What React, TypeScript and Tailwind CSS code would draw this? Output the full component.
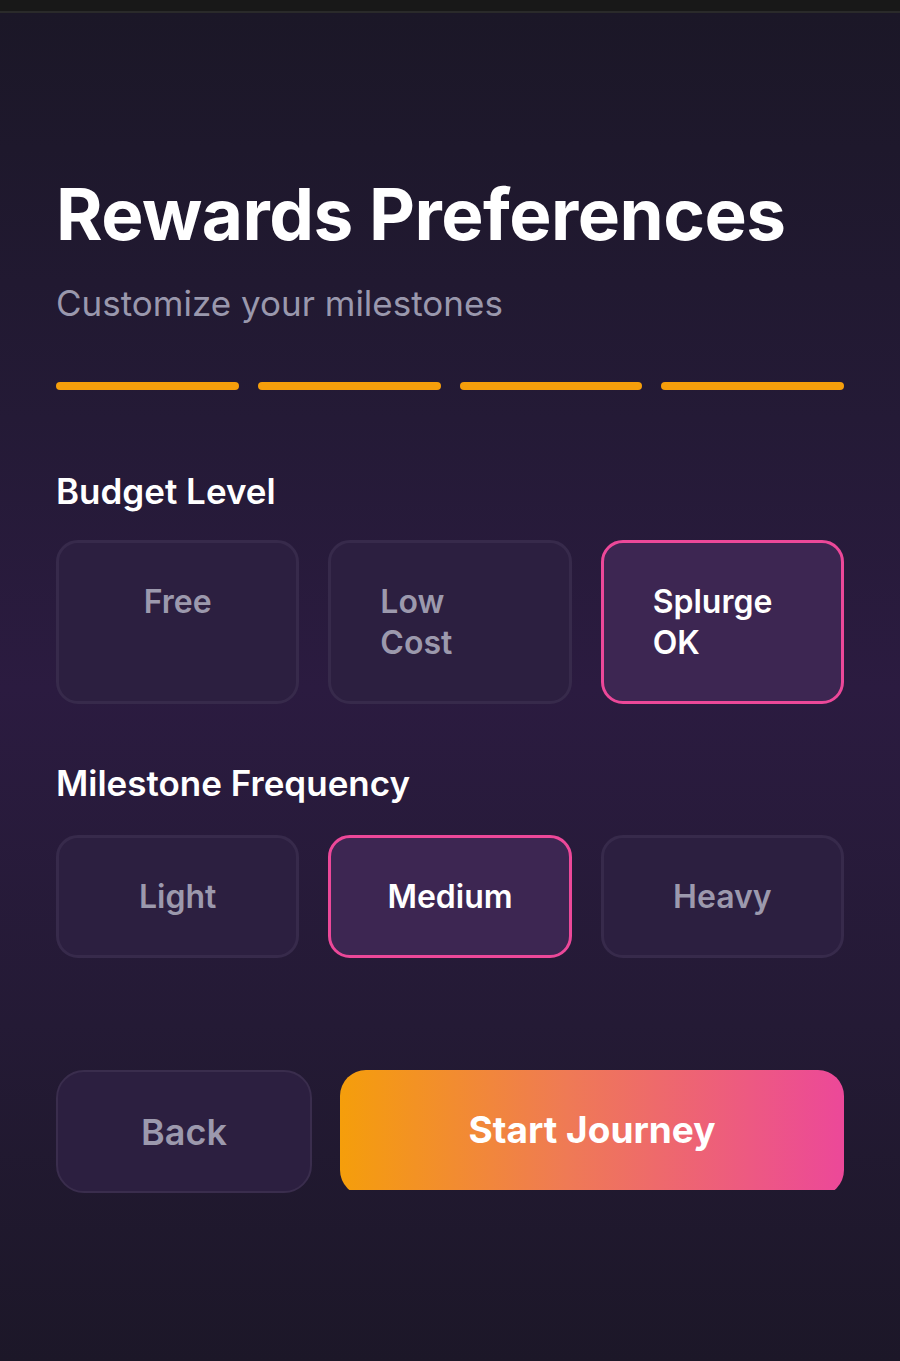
import React, { useState } from 'react';

const BUDGETS = ['Free', 'Low\nCost', 'Splurge\nOK'];
const FREQUENCIES = ['Light', 'Medium', 'Heavy'];

interface OptionCardProps {
  label: string;
  selected: boolean;
  tall?: boolean;
  onSelect: () => void;
}

const OptionCard = ({ label, selected, tall, onSelect }: OptionCardProps) => {
  const multiline = label.includes('\n');

  return (
    <button
      onClick={onSelect}
      className={`flex justify-center rounded-[22px] border-[3px] px-[49px] py-[38px] text-[32px] font-semibold leading-[41px] ${
        tall ? 'items-start' : 'items-center'
      } ${
        selected
          ? 'border-[#ec4899] bg-[#3d2652] text-white'
          : 'border-[#372a4b] bg-[#2c1f40] text-[#9c99ad]'
      }`}
    >
      <span className={multiline ? 'w-full whitespace-pre-line text-left' : 'text-center'}>{label}</span>
    </button>
  );
};

export default function App() {
  const [budget, setBudget] = useState(2);
  const [frequency, setFrequency] = useState(1);

  return (
    <div
      className="flex min-h-[1361px] flex-col bg-[#181818]"
      style={{ fontFamily: 'Inter, "Noto Sans", sans-serif' }}
    >
      {/* status strip */}
      <div className="h-[13px] shrink-0 border-b-2 border-[#2a2a2a]" />

      <div className="flex flex-1 flex-col bg-[linear-gradient(to_bottom,#1b1727_0%,#241a36_30%,#2b1b40_50%,#241a35_75%,#1c1728_100%)] px-[56px]">
        <h1 className="mt-[158px] text-[71px] font-bold leading-[86px] tracking-[-0.5px] text-white">
          Rewards Preferences
        </h1>
        <p className="mt-[24px] text-[35px] leading-[44px] text-[#9a98ad]">Customize your milestones</p>

        {/* step progress */}
        <div className="mt-[57px] grid grid-cols-4 gap-[19px]">
          {[0, 1, 2, 3].map((i) => (
            <div key={i} className="h-[8px] rounded-full bg-[#f59e0b]" />
          ))}
        </div>

        <h2 className="mt-[79px] text-[35px] font-semibold leading-[44px] text-white">Budget Level</h2>
        <div className="mt-[27px] grid grid-cols-3 gap-[29px]">
          {BUDGETS.map((b, i) => (
            <OptionCard key={b} label={b} tall selected={budget === i} onSelect={() => setBudget(i)} />
          ))}
        </div>

        <h2 className="mt-[57px] text-[35px] font-semibold leading-[44px] text-white">Milestone Frequency</h2>
        <div className="mt-[30px] grid grid-cols-3 gap-[29px]">
          {FREQUENCIES.map((f, i) => (
            <OptionCard key={f} label={f} selected={frequency === i} onSelect={() => setFrequency(i)} />
          ))}
        </div>

        <div className="mt-[112px] flex gap-[28px]">
          <button className="h-[123px] flex-1 rounded-[28px] border-2 border-[#3a2d4d] bg-[#2c1f40] text-[36px] font-semibold text-[#9c99ad]">
            Back
          </button>
          <div className="h-[120px] flex-[2] overflow-hidden">
            <button className="h-[126px] w-full rounded-[26px] bg-[linear-gradient(to_right,#f59e0b,#ef7a55_45%,#ec4899)] pb-[6px] text-[37px] font-bold text-white">
              Start Journey
            </button>
          </div>
        </div>
      </div>
    </div>
  );
}
